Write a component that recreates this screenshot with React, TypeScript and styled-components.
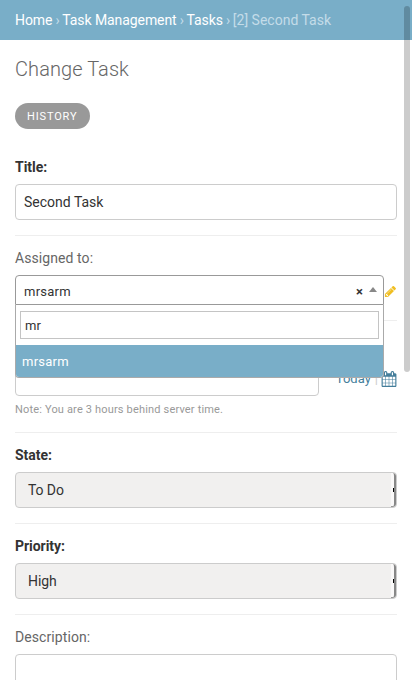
import React from 'react';
import styled, { createGlobalStyle, css } from 'styled-components';

const GlobalStyle = createGlobalStyle`
  *, *::before, *::after { box-sizing: border-box; }
  html, body { margin: 0; padding: 0; background: #fff; }
  body {
    font-family: Roboto, "Open Sans", sans-serif;
    font-size: 14px;
    color: #333;
    height: 680px;
    overflow: hidden;
  }
`;

const Page = styled.div`
  position: relative;
  height: 680px;
  overflow: hidden;
`;

const Breadcrumbs = styled.nav`
  height: 40px;
  padding: 0 15px;
  background: #79aec8;
  color: #c4dce8;
  line-height: 40px;
  letter-spacing: -0.4px;
  white-space: nowrap;
`;

const Crumb = styled.a`
  color: #fff;
  letter-spacing: -0.08px;
`;

const CurrentCrumb = styled.span`
  letter-spacing: 0;
`;

const Content = styled.main`
  padding: 17px 15px 0;
`;

const PageTitle = styled.h1`
  margin: 0 0 22px;
  font-size: 20px;
  line-height: 24px;
  font-weight: 300;
  letter-spacing: 0.08px;
  color: #666;
`;

const HistoryButton = styled.a`
  display: block;
  width: 75px;
  height: 26px;
  padding-left: 12px;
  border-radius: 15px;
  background: #999;
  color: #fff;
  font-size: 11px;
  line-height: 27px;
  letter-spacing: 0.85px;
  text-transform: uppercase;
`;

const Form = styled.form`
  padding-top: 15px;
`;

const FormRow = styled.div`
  padding: 15px 0;
  border-bottom: 1px solid #eee;
  &:first-child { padding-top: 16px; }
`;

const Label = styled.label<{ $required?: boolean }>`
  display: block;
  height: 24px;
  margin-top: -1px;
  margin-bottom: 1px;
  line-height: 16px;
  font-weight: ${(p) => (p.$required ? 700 : 400)};
  letter-spacing: ${(p) => (p.$required ? '-0.04px' : '0.08px')};
  color: ${(p) => (p.$required ? '#333' : '#666')};
`;

const controlFrame = css`
  display: block;
  height: 36px;
  border: 1px solid #ccc;
  border-radius: 4px;
  font: 14px/34px Roboto, sans-serif;
  color: #333;
`;

const TextInput = styled.input<{ $width?: number }>`
  ${controlFrame}
  width: ${(p) => (p.$width ? `${p.$width}px` : '100%')};
  padding: 0 8px;
  background: #fff;
  outline: none;
`;

const TextArea = styled.textarea`
  ${controlFrame}
  width: 100%;
  height: 160px;
  resize: none;
  background: #fff;
`;

const SelectBox = styled.div`
  ${controlFrame}
  display: flex;
  justify-content: space-between;
  padding-left: 12px;
  background: #f1f0ef;
  letter-spacing: -0.1px;
  overflow: hidden;
`;

const SelectEdge = styled.span`
  display: flex;
  align-items: center;
  justify-content: flex-end;
  width: 5px;
  height: 34px;
  background: #faf9f9;
  border-right: 2px solid #888;
  border-bottom: 1px solid #999;
  border-radius: 0 3px 3px 0;
  &::after {
    content: '';
    width: 1px;
    height: 4px;
    background: #000;
  }
`;

const Inline = styled.div`
  display: flex;
  align-items: center;
`;

const Select2 = styled.div`
  position: relative;
  width: 369px;
  height: 30px;
  font-size: 13px;
  letter-spacing: 0.25px;
`;

const Selection = styled.div`
  display: flex;
  align-items: center;
  height: 30px;
  padding: 2px 6px 0 8px;
  border: 1px solid #999;
  border-radius: 4px 4px 0 0;
  background: #fff;
`;

const SelectionText = styled.span`
  flex: 1;
`;

const Clear = styled.span`
  margin-right: 6px;
  font-weight: 700;
  letter-spacing: 0;
`;

const Arrow = styled.span`
  width: 0;
  height: 0;
  margin-top: -4px;
  border: 4px solid transparent;
  border-top: 0;
  border-bottom: 5px solid #888;
`;

const Dropdown = styled.div`
  position: absolute;
  top: 30px;
  left: 0;
  z-index: 2;
  width: 369px;
  height: 73px;
  border: 1px solid #aaa;
  border-top: 0;
  border-radius: 0 0 4px 4px;
  background: #fff;
  overflow: hidden;
`;

const SearchField = styled.input`
  display: block;
  width: 359px;
  height: 28px;
  margin: 6px 4px;
  padding: 0 4px;
  border: 1px solid #c4c4c4;
  font: 13px Roboto, sans-serif;
  letter-spacing: 0.2px;
  color: #333;
  outline: none;
`;

const Option = styled.div`
  height: 32px;
  padding-left: 6px;
  line-height: 33px;
  background: #79aec8;
  color: #fff;
`;

const PencilIcon = styled.svg`
  display: block;
  margin: 3px 0 0 0;
  width: 13px;
  height: 13px;
  fill: #efb80b;
  opacity: 0.9;
`;

const Shortcuts = styled.span`
  display: flex;
  flex: 1;
  align-items: center;
  justify-content: flex-end;
  font-size: 13px;
  color: #ccc;
`;

const TodayLink = styled.a`
  color: #447e9b;
`;

const Divider = styled.span`
  margin: 0 3px 0 4px;
`;

const CalendarIcon = styled.svg`
  display: block;
  width: 16px;
  height: 16px;
  margin-top: 2px;
  fill: #447e9b;
`;

const Note = styled.div`
  height: 21px;
  padding-top: 6px;
  font-size: 11px;
  line-height: 15px;
  letter-spacing: 0.17px;
  color: #999;
`;

const Scrollbar = styled.div`
  position: absolute;
  top: 6px;
  right: 2px;
  z-index: 3;
  width: 6px;
  height: 366px;
  border-radius: 3px;
  background: rgba(0, 0, 0, 0.2);
`;

function StaticSelect({ value }: { value: string }) {
  return (
    <SelectBox>
      {value}
      <SelectEdge />
    </SelectBox>
  );
}

export default function App() {
  return (
    <Page>
      <GlobalStyle />
      <Breadcrumbs>
        <Crumb>Home</Crumb> › <Crumb>Task Management</Crumb> › <Crumb>Tasks</Crumb> ›{' '}
        <CurrentCrumb>[2] Second Task</CurrentCrumb>
      </Breadcrumbs>
      <Content>
        <PageTitle>Change Task</PageTitle>
        <HistoryButton>History</HistoryButton>
        <Form>
          <FormRow>
            <Label $required>Title:</Label>
            <TextInput defaultValue="Second Task" />
          </FormRow>
          <FormRow>
            <Label>Assigned to:</Label>
            <Inline>
              <Select2>
                <Selection>
                  <SelectionText>mrsarm</SelectionText>
                  <Clear>×</Clear>
                  <Arrow />
                </Selection>
                <Dropdown>
                  <SearchField defaultValue="mr" />
                  <Option>mrsarm</Option>
                </Dropdown>
              </Select2>
              <PencilIcon viewBox="0 0 1792 1792">
                <path d="M491 1536l91-91-235-235-91 91v107h128v128h107zm523-928q0-22-22-22-10 0-17 7l-542 542q-7 7-7 17 0 22 22 22 10 0 17-7l542-542q7-7 7-17zm-54-192l416 416-832 832h-416v-416zm683 96q0 53-37 90l-166 166-416-416 166-165q36-38 90-38 53 0 91 38l235 234q37 39 37 91z" />
              </PencilIcon>
            </Inline>
          </FormRow>
          <FormRow>
            <Label>Due date:</Label>
            <Inline>
              <TextInput $width={304} />
              <Shortcuts>
                <TodayLink>Today</TodayLink>
                <Divider>|</Divider>
                <CalendarIcon viewBox="0 0 1792 1792">
                  <path d="M192 1664h288v-288h-288v288zm352 0h320v-288h-320v288zm-352-352h288v-320h-288v320zm352 0h320v-320h-320v320zm-352-384h288v-288h-288v288zm736 736h320v-288h-320v288zm-384-736h320v-288h-320v288zm768 736h288v-288h-288v288zm-384-352h320v-320h-320v320zm-352-864v-288q0-13-9.500-22.500t-22.500-9.500h-64q-13 0-22.500 9.500t-9.500 22.500v288q0 13 9.500 22.500t22.500 9.500h64q13 0 22.500-9.500t9.500-22.500zm736 864h288v-320h-288v320zm-384-384h320v-288h-320v288zm384 0h288v-288h-288v288zm32-480v-288q0-13-9.500-22.500t-22.500-9.500h-64q-13 0-22.500 9.500t-9.500 22.500v288q0 13 9.500 22.500t22.500 9.500h64q13 0 22.500-9.500t9.500-22.500zm384-64v1280q0 52-38 90t-90 38h-1408q-52 0-90-38t-38-90v-1280q0-52 38-90t90-38h128v-96q0-66 47-113t113-47h64q66 0 113 47t47 113v96h384v-96q0-66 47-113t113-47h64q66 0 113 47t47 113v96h128q52 0 90 38t38 90z" />
                </CalendarIcon>
              </Shortcuts>
            </Inline>
            <Note>Note: You are 3 hours behind server time.</Note>
          </FormRow>
          <FormRow>
            <Label $required>State:</Label>
            <StaticSelect value="To Do" />
          </FormRow>
          <FormRow>
            <Label $required>Priority:</Label>
            <StaticSelect value="High" />
          </FormRow>
          <FormRow>
            <Label>Description:</Label>
            <TextArea />
          </FormRow>
        </Form>
      </Content>
      <Scrollbar />
    </Page>
  );
}
